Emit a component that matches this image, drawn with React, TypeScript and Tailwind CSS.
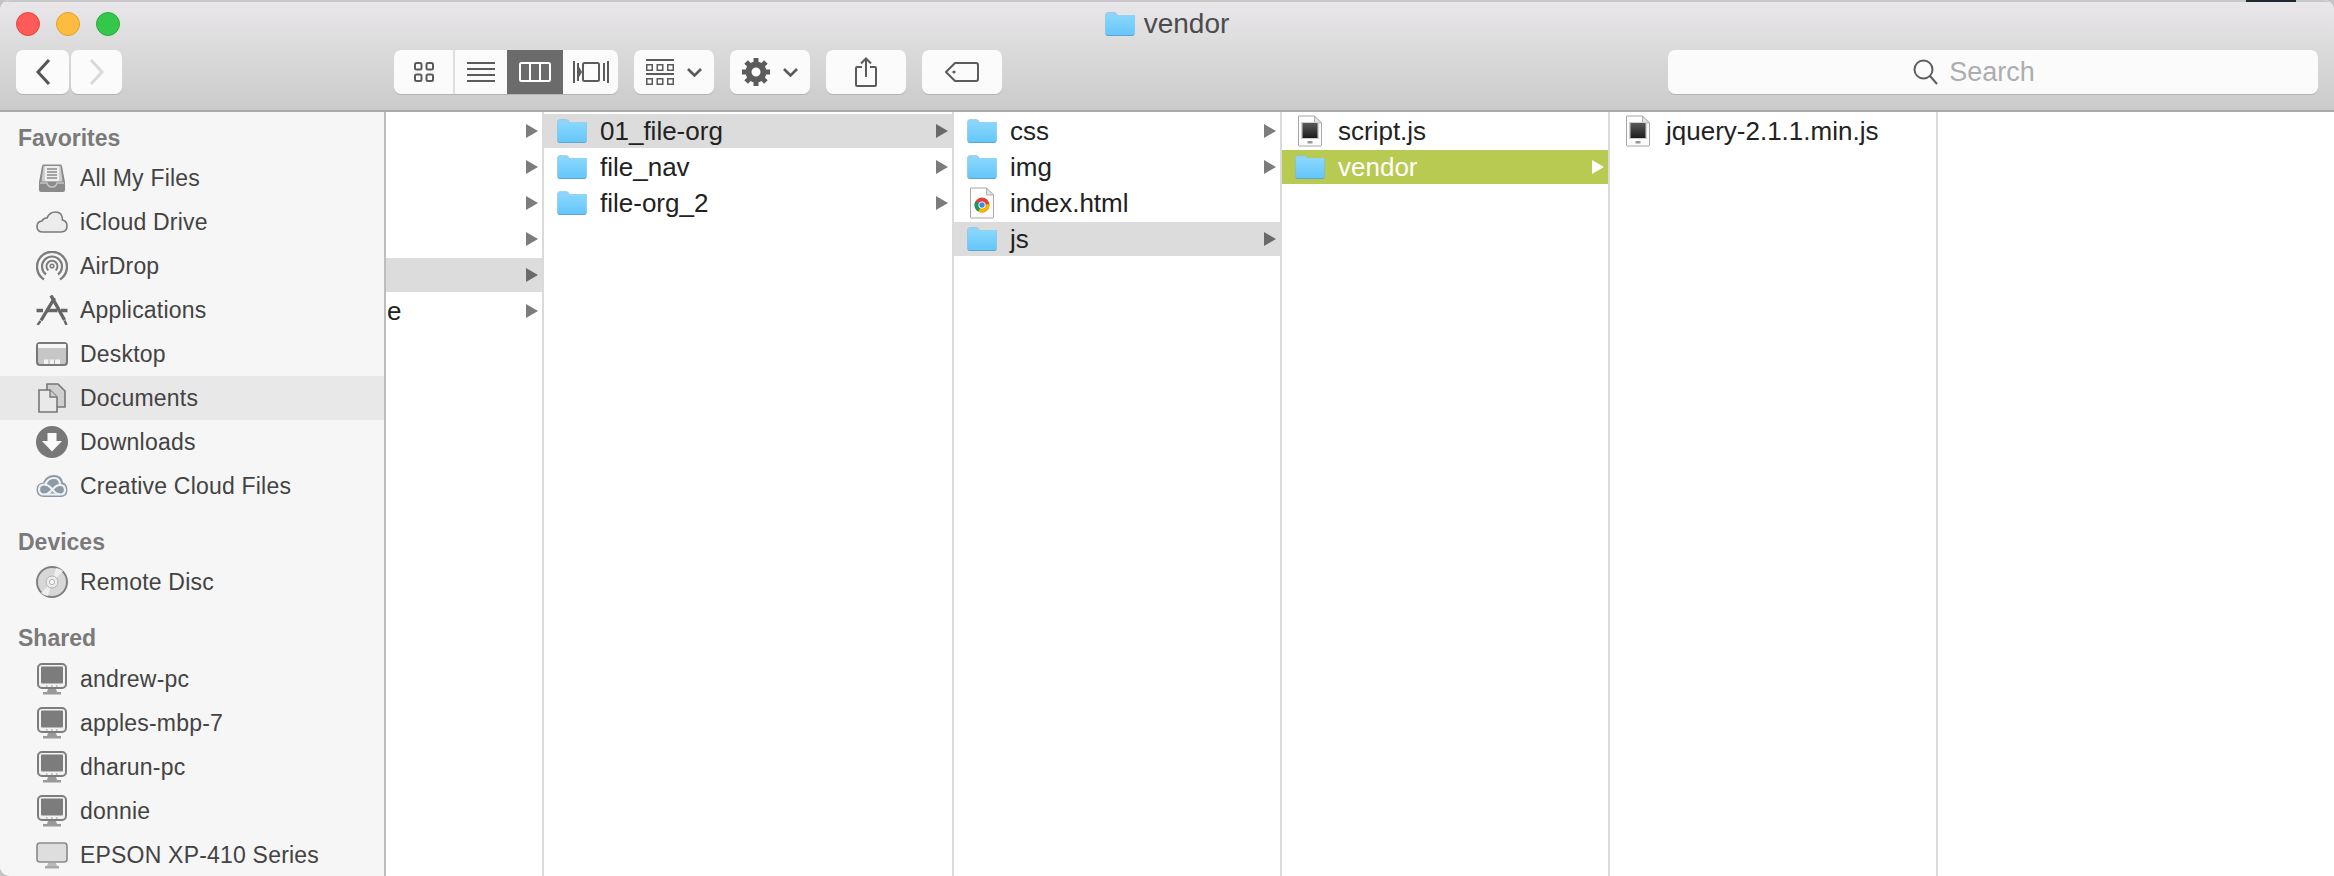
import type { ReactNode } from "react";

const ink = "#5b5b5b";

function Folder() {
  return (
    <svg width="30" height="24" viewBox="0 0 30 24" className="shrink-0">
      <defs>
        <linearGradient id="folderBody" x1="0" y1="0" x2="0" y2="1">
          <stop offset="0" stopColor="#86d6fd" />
          <stop offset="1" stopColor="#66c6fa" />
        </linearGradient>
      </defs>
      <path d="M0.5 3 Q0.5 0.5 3 0.5 H9 Q10.5 0.5 11.5 1.8 L12.5 3 H29.5 V22 Q29.5 24 27.5 24 H2.5 Q0.5 24 0.5 22 Z" fill="#5ea6d4" />
      <path d="M0.5 3 Q0.5 0.5 3 0.5 H9 Q10.5 0.5 11.5 1.8 L12.5 3 H29.5 V5 H0.5 Z" fill="#8fd4f7" />
      <path d="M0.5 4.5 H29.5 V22 Q29.5 23 27.5 23 H2.5 Q0.5 23 0.5 22 Z" fill="url(#folderBody)" />
    </svg>
  );
}

function DocPage({ children }: { children: ReactNode }) {
  return (
    <svg width="30" height="32" viewBox="0 0 30 32" className="shrink-0">
      <path d="M3.5 1 H19.5 L26.5 8 V30 Q26.5 31 25.5 31 H4.5 Q3.5 31 3.5 30 Z" fill="#fdfdfd" stroke="#a8a8a8" />
      <path d="M19.5 1 V8 H26.5 Z" fill="#e4e4e4" stroke="#b0b0b0" />
      {children}
    </svg>
  );
}

function ChromeDoc() {
  return (
    <DocPage>
      <circle cx="15" cy="18" r="7.5" fill="#db4437" />
      <path d="M15 18 L8.5 14.3 A7.5 7.5 0 0 0 11.3 24.5 Z" fill="#0f9d58" />
      <path d="M15 18 L11.3 24.5 A7.5 7.5 0 0 0 22.4 17 Z" fill="#f4b400" />
      <circle cx="15" cy="18" r="3.6" fill="#fff" />
      <circle cx="15" cy="18" r="2.7" fill="#4285f4" />
    </DocPage>
  );
}

function ScriptDoc() {
  return (
    <DocPage>
      <defs>
        <linearGradient id="scriptScreen" x1="0" y1="0" x2="0" y2="1">
          <stop offset="0" stopColor="#5a5a5a" />
          <stop offset="1" stopColor="#1c1c1c" />
        </linearGradient>
      </defs>
      <rect x="6" y="7" width="18" height="17" fill="#cfcfcf" />
      <rect x="7.5" y="8" width="15" height="15" fill="url(#scriptScreen)" />
      <rect x="12.5" y="26" width="5" height="2.5" fill="#9a9a9a" />
    </DocPage>
  );
}

function Arrow({ color }: { color: string }) {
  return (
    <svg width="12" height="14" viewBox="0 0 12 14" className="shrink-0">
      <path d="M0 0 L12 7 L0 14 Z" fill={color} />
    </svg>
  );
}

type RowState = "none" | "gray" | "green";

function Row({
  icon,
  name,
  arrow = false,
  state = "none",
  flush = false,
}: {
  icon?: ReactNode;
  name?: string;
  arrow?: boolean;
  state?: RowState;
  flush?: boolean;
}) {
  const bg = state === "gray" ? "bg-[#dcdcdc]" : state === "green" ? "bg-[#b8ca52]" : "";
  const fg = state === "green" ? "text-white" : "text-[#222222]";
  const arrowColor = state === "green" ? "#ffffff" : state === "gray" ? "#6a6a6a" : "#7c7c7c";
  return (
    <div className={`flex h-[34px] items-center pr-[4px] ${flush ? "pl-[1px]" : "pl-[13px]"} ${bg}`}>
      {icon && <div className="mr-[13px] flex w-[30px] shrink-0 justify-center">{icon}</div>}
      {name && <span className={`text-[26px] leading-[34px] ${fg}`}>{name}</span>}
      {arrow && (
        <div className="ml-auto">
          <Arrow color={arrowColor} />
        </div>
      )}
    </div>
  );
}

function Column({ width, children }: { width: string; children?: ReactNode }) {
  return (
    <div className={`flex h-full shrink-0 flex-col gap-[2px] border-r-2 border-[#dadada] pt-[2px] ${width}`}>
      {children}
    </div>
  );
}

function ToolBtn({ width, children }: { width: string; children: ReactNode }) {
  return (
    <div className={`flex h-[44px] items-center justify-center rounded-[7px] bg-[#fbfbfb] shadow-[0_1px_0_#b4b4b4] ${width}`}>
      {children}
    </div>
  );
}

function Chevron() {
  return (
    <svg width="15" height="9" viewBox="0 0 15 9" fill="none" stroke={ink} strokeWidth="2.6">
      <path d="M1 1 L7.5 7.5 L14 1" />
    </svg>
  );
}

function Gear() {
  const teeth = [0, 45, 90, 135, 180, 225, 270, 315];
  return (
    <svg width="28" height="28" viewBox="0 0 28 28">
      <circle cx="14" cy="14" r="7.5" fill="none" stroke={ink} strokeWidth="6" />
      {teeth.map((a) => (
        <rect key={a} x="11.5" y="0" width="5" height="6" fill={ink} transform={`rotate(${a} 14 14)`} />
      ))}
    </svg>
  );
}

function ArrangeIcon() {
  const squares = [0, 10.5, 21];
  return (
    <svg width="28" height="26" viewBox="0 0 28 26" fill="none" stroke={ink}>
      <path d="M0 1 H28 M0 15 H28" strokeWidth="2" />
      {squares.map((x) => (
        <g key={x}>
          <rect x={x + 0.75} y="5.75" width="5.5" height="5.5" strokeWidth="1.5" />
          <rect x={x + 0.75} y="19.75" width="5.5" height="5.5" strokeWidth="1.5" />
        </g>
      ))}
    </svg>
  );
}

function SideRow({ icon, label, active = false }: { icon: ReactNode; label: string; active?: boolean }) {
  return (
    <div className={`flex h-[44px] shrink-0 items-center gap-[12px] pl-[36px] ${active ? "bg-[#e8e8e8]" : ""}`}>
      <div className="flex w-[32px] shrink-0 justify-center">{icon}</div>
      <span className="text-[23px] leading-[28px] tracking-[0.2px] text-[#434343]">{label}</span>
    </div>
  );
}

function Monitor() {
  return (
    <svg width="30" height="32" viewBox="0 0 30 32">
      <rect x="1" y="1" width="28" height="24" rx="4" fill="#f2f2f2" stroke="#7d7d7d" strokeWidth="2" />
      <rect x="4" y="3.5" width="22" height="17" rx="1" fill="#7c7c7c" />
      <path d="M9 23 H10.5 M14 23 H15.5 M19 23 H20.5" stroke="#888" />
      <path d="M11 26 H19 L20 29 H10 Z" fill="#9a9a9a" />
      <rect x="6" y="29" width="18" height="2.5" fill="#9a9a9a" />
    </svg>
  );
}

const sideIcons = {
  files: (
    <svg width="26" height="28" viewBox="0 0 26 28">
      <path d="M3 2 Q3 0.5 4.5 0.5 H21.5 Q23 0.5 23 2 L26 18 V26 Q26 28 24 28 H2 Q0 28 0 26 V18 Z" fill="#8a8a8a" />
      <path d="M4.5 2 H21.5 L23.5 17.5 H2.5 Z" fill="#cfcfcf" />
      <rect x="6" y="2" width="14" height="15" fill="#efefef" />
      <path d="M8 5 H18 M8 8 H18 M8 11 H18 M8 14 H18" stroke="#8a8a8a" strokeWidth="1.4" />
      <path d="M1 19 H8 Q9 23 13 23 Q17 23 18 19 H25" fill="none" stroke="#c4c4c4" strokeWidth="1.4" />
    </svg>
  ),
  cloud: (
    <svg width="32" height="22" viewBox="0 0 32 22">
      <path d="M7 21 Q1 21 1 15.5 Q1 10.5 6 10 Q7.5 6.5 11 7 Q13.5 1 19.5 1 Q26.5 1 26.5 9 Q31 10 31 15 Q31 21 25 21 Z" fill="#ececec" stroke="#7b7b7b" strokeWidth="1.6" />
    </svg>
  ),
  airdrop: (
    <svg width="32" height="30" viewBox="0 0 32 30" fill="none" stroke="#7d7d7d">
      <path d="M8 28.5 A15 15 0 1 1 24 28.5" strokeWidth="2.4" />
      <path d="M10 23.5 A10 10 0 1 1 22 23.5" strokeWidth="2.2" />
      <path d="M12.4 19.5 A5.5 5.5 0 1 1 19.6 19.5" strokeWidth="2" />
      <circle cx="16" cy="15" r="1.8" strokeWidth="1.6" />
    </svg>
  ),
  apps: (
    <svg width="32" height="30" viewBox="0 0 32 30" fill="none" stroke="#666666" strokeLinecap="butt">
      <path d="M15 0.5 L28.5 25" strokeWidth="3.4" />
      <path d="M18.5 3 L5 25.5" strokeWidth="3.4" />
      <path d="M0.5 15.5 H7 M10.5 15.5 H21.5 M25 15.5 H31.5" strokeWidth="3.4" />
      <path d="M1.5 30 L4.5 26 M30.5 30 L28.5 25.5" strokeWidth="2.4" />
    </svg>
  ),
  desktop: (
    <svg width="32" height="24" viewBox="0 0 32 24">
      <rect x="1" y="1" width="30" height="22" rx="3" fill="#c6c6c6" stroke="#777777" strokeWidth="2" />
      <rect x="2" y="2" width="28" height="4" fill="#f6f6f6" />
      <rect x="8" y="17.5" width="16" height="4.5" fill="#f2f2f2" />
      <path d="M13 17.5 V22 M18.5 17.5 V22" stroke="#aaa" />
    </svg>
  ),
  docs: (
    <svg width="28" height="30" viewBox="0 0 28 30">
      <path d="M9 1 H20 L27 8 V24 H9 Z" fill="#cfcfcf" stroke="#777777" strokeWidth="1.6" />
      <path d="M1 7 H12 L19 14 V29 H1 Z" fill="#e9e9e9" stroke="#777777" strokeWidth="1.6" />
      <path d="M12 7 V14 H19" fill="#cfcfcf" stroke="#777777" strokeWidth="1.4" />
    </svg>
  ),
  downloads: (
    <svg width="32" height="32" viewBox="0 0 32 32">
      <circle cx="16" cy="16" r="16" fill="#787878" />
      <path d="M11.5 7 H20.5 V15 H26 L16 25.5 L6 15 H11.5 Z" fill="#fafafa" />
    </svg>
  ),
  cc: (
    <svg width="32" height="24" viewBox="0 0 32 24" fill="none">
      <path d="M8 23 Q0.5 23 0.5 15.5 Q0.5 9.5 7 8.5 Q10 1 18 1 Q26 1 27 8.5 Q31.5 10 31.5 16 Q31.5 23 25 23 Z" fill="#8d9aa6" />
      <path d="M8 20.5 Q3 20.5 3 15.5 Q3 10.5 8 10.5 Q12 10.5 15 14 L18.5 18 Q21 20.5 24.5 20.5 Q29 20.5 29 16 Q29 11 24 11 Q24 4 18 4 Q12 4 9.5 10" stroke="#eef1f3" strokeWidth="2.2" />
      <path d="M8 20.5 H24 M8 20.5 Q12 20.5 15 17 L19 13 Q21 11 24 11" stroke="#eef1f3" strokeWidth="2.2" />
    </svg>
  ),
  disc: (
    <svg width="32" height="32" viewBox="0 0 32 32">
      <circle cx="16" cy="16" r="15" fill="#d8d8d8" stroke="#808080" strokeWidth="2" />
      <path d="M16 16 L5 27 A15 15 0 0 0 12 30 Z M16 16 L27 5 A15 15 0 0 0 20 2 Z" fill="#eeeeee" />
      <circle cx="16" cy="16" r="6" fill="#ececec" stroke="#b0b0b0" />
      <circle cx="16" cy="16" r="2.6" fill="#f8f8f8" stroke="#b0b0b0" />
    </svg>
  ),
  printer: (
    <svg width="32" height="27" viewBox="0 0 32 27">
      <rect x="1" y="1" width="30" height="19" rx="3" fill="#dedede" stroke="#8a8a8a" strokeWidth="1.6" />
      <path d="M12 21 H20 L21 24 H11 Z" fill="#b9b9b9" />
      <rect x="9" y="24" width="14" height="2.5" fill="#a8a8a8" />
    </svg>
  ),
};

export default function App() {
  return (
    <div className="relative h-[876px] w-[2334px] overflow-hidden bg-[#c4c4c4] font-['Liberation_Sans',Arial,sans-serif]">
      {/* bit of the window behind, showing over the top edge */}
      <div className="absolute right-[38px] top-0 h-[2px] w-[50px] bg-[#1f2a30]" />

      <div className="flex h-full flex-col overflow-hidden rounded-t-[10px] rounded-bl-[10px] bg-white">
        <div className="flex h-[112px] shrink-0 flex-col border-y-2 border-t-[#c9c9c9] border-b-[#a9a9a9] bg-gradient-to-b from-[#e9e7e9] to-[#cbcbcb]">
          <div className="grid h-[48px] shrink-0 grid-cols-[1fr_auto_1fr] items-center px-[16px] pb-[4px]">
            <div className="flex gap-[16px]">
              <div className="h-[24px] w-[24px] rounded-full border border-[#e2463f] bg-[#fc5b57]" />
              <div className="h-[24px] w-[24px] rounded-full border border-[#e0a028] bg-[#fdbc40]" />
              <div className="h-[24px] w-[24px] rounded-full border border-[#2aa93c] bg-[#34c84a]" />
            </div>
            <div className="flex items-center gap-[9px]">
              <Folder />
              <span className="text-[28px] leading-[30px] text-[#4c4c4c]">vendor</span>
            </div>
            <div />
          </div>

          <div className="flex h-[44px] shrink-0 items-center px-[16px]">
            <div className="flex gap-[2px]">
              <ToolBtn width="w-[53px]">
                <svg width="16" height="28" viewBox="0 0 16 28" fill="none" stroke="#555555" strokeWidth="3">
                  <path d="M14 2 L3 14 L14 26" />
                </svg>
              </ToolBtn>
              <ToolBtn width="w-[51px]">
                <svg width="16" height="28" viewBox="0 0 16 28" fill="none" stroke="#d9d9d9" strokeWidth="3">
                  <path d="M2 2 L13 14 L2 26" />
                </svg>
              </ToolBtn>
            </div>

            <div className="ml-[272px] flex h-[44px] w-[224px] overflow-hidden rounded-[7px] bg-[#fbfbfb] shadow-[0_1px_0_#b4b4b4]">
              <div className="flex w-[61px] items-center justify-center border-r-2 border-[#dedede]">
                <svg width="20" height="20" viewBox="0 0 20 20" fill="none" stroke={ink} strokeWidth="2">
                  <rect x="1" y="1" width="6.5" height="6.5" rx="1.5" />
                  <rect x="12.5" y="1" width="6.5" height="6.5" rx="1.5" />
                  <rect x="1" y="12.5" width="6.5" height="6.5" rx="1.5" />
                  <rect x="12.5" y="12.5" width="6.5" height="6.5" rx="1.5" />
                </svg>
              </div>
              <div className="flex w-[52px] items-center justify-center">
                <svg width="28" height="20" viewBox="0 0 28 20" stroke={ink} strokeWidth="2">
                  <path d="M0 1 H28 M0 7 H28 M0 13 H28 M0 19 H28" />
                </svg>
              </div>
              <div className="flex w-[56px] items-center justify-center bg-[#6b6b6b]">
                <svg width="32" height="20" viewBox="0 0 32 20" fill="none" stroke="#ffffff" strokeWidth="2">
                  <rect x="1" y="1" width="30" height="18" rx="1.5" />
                  <path d="M11 1 V19 M21 1 V19" />
                </svg>
              </div>
              <div className="flex w-[55px] items-center justify-center">
                <svg width="36" height="22" viewBox="0 0 36 22" fill="none" stroke={ink} strokeWidth="2">
                  <path d="M1 0 V22 M5 2 V20 M31 2 V20 M35 0 V22" />
                  <path d="M5 4 L9 11 L5 18 Z" fill={ink} stroke="none" />
                  <rect x="10" y="2" width="16" height="18" rx="1.5" />
                </svg>
              </div>
            </div>

            <div className="ml-[16px] flex gap-[16px]">
              <ToolBtn width="w-[80px] gap-[13px]">
                <ArrangeIcon />
                <Chevron />
              </ToolBtn>
              <ToolBtn width="w-[80px] gap-[13px]">
                <Gear />
                <Chevron />
              </ToolBtn>
              <ToolBtn width="w-[80px]">
                <svg width="22" height="30" viewBox="0 0 22 30" fill="none" stroke={ink} strokeWidth="2">
                  <path d="M7 10 H2 Q1 10 1 11 V28 Q1 29 2 29 H20 Q21 29 21 28 V11 Q21 10 20 10 H15" />
                  <path d="M11 20 V2 M6 6.5 L11 1.5 L16 6.5" />
                </svg>
              </ToolBtn>
              <ToolBtn width="w-[80px]">
                <svg width="34" height="20" viewBox="0 0 34 20" fill="none" stroke={ink} strokeWidth="2">
                  <path d="M10 1 H31 Q33 1 33 3 V17 Q33 19 31 19 H10 L1 10 Z" />
                  <circle cx="9" cy="10" r="1.6" fill={ink} stroke="none" />
                </svg>
              </ToolBtn>
            </div>

            <div className="ml-auto flex h-[44px] w-[650px] items-center justify-center gap-[10px] rounded-[7px] bg-[#fbfbfb] pr-[38px] shadow-[0_1px_0_#b4b4b4]">
              <svg width="26" height="26" viewBox="0 0 26 26" fill="none" stroke="#5e5e5e" strokeWidth="2">
                <circle cx="10.5" cy="10.5" r="9" />
                <path d="M17 17 L24 25" />
              </svg>
              <span className="text-[27px] leading-[30px] text-[#adadad]">Search</span>
            </div>
          </div>
        </div>

        <div className="flex min-h-0 flex-1">
          <div className="flex w-[386px] shrink-0 flex-col overflow-hidden border-r-2 border-[#bdbdbd] bg-[#f6f6f6]">
            <div className="mb-[6px] mt-[14px] shrink-0 pl-[18px] text-[23px] font-bold leading-[24px] text-[#7a7a7a]">Favorites</div>
            <SideRow icon={sideIcons.files} label="All My Files" />
            <SideRow icon={sideIcons.cloud} label="iCloud Drive" />
            <SideRow icon={sideIcons.airdrop} label="AirDrop" />
            <SideRow icon={sideIcons.apps} label="Applications" />
            <SideRow icon={sideIcons.desktop} label="Desktop" />
            <SideRow icon={sideIcons.docs} label="Documents" active />
            <SideRow icon={sideIcons.downloads} label="Downloads" />
            <SideRow icon={sideIcons.cc} label="Creative Cloud Files" />
            <div className="mb-[6px] mt-[22px] shrink-0 pl-[18px] text-[23px] font-bold leading-[24px] text-[#7a7a7a]">Devices</div>
            <SideRow icon={sideIcons.disc} label="Remote Disc" />
            <div className="mb-[7px] mt-[22px] shrink-0 pl-[18px] text-[23px] font-bold leading-[24px] text-[#7a7a7a]">Shared</div>
            <SideRow icon={<Monitor />} label="andrew-pc" />
            <SideRow icon={<Monitor />} label="apples-mbp-7" />
            <SideRow icon={<Monitor />} label="dharun-pc" />
            <SideRow icon={<Monitor />} label="donnie" />
            <SideRow icon={sideIcons.printer} label="EPSON XP-410 Series" />
          </div>

          <Column width="w-[158px]">
            <Row arrow />
            <Row arrow />
            <Row arrow />
            <Row arrow />
            <Row arrow state="gray" />
            <Row arrow name="e" flush />
          </Column>
          <Column width="w-[410px]">
            <Row icon={<Folder />} name="01_file-org" arrow state="gray" />
            <Row icon={<Folder />} name="file_nav" arrow />
            <Row icon={<Folder />} name="file-org_2" arrow />
          </Column>
          <Column width="w-[328px]">
            <Row icon={<Folder />} name="css" arrow />
            <Row icon={<Folder />} name="img" arrow />
            <Row icon={<ChromeDoc />} name="index.html" />
            <Row icon={<Folder />} name="js" arrow state="gray" />
          </Column>
          <Column width="w-[328px]">
            <Row icon={<ScriptDoc />} name="script.js" />
            <Row icon={<Folder />} name="vendor" arrow state="green" />
          </Column>
          <Column width="w-[328px]">
            <Row icon={<ScriptDoc />} name="jquery-2.1.1.min.js" />
          </Column>
          <div className="flex-1" />
        </div>
      </div>
    </div>
  );
}
